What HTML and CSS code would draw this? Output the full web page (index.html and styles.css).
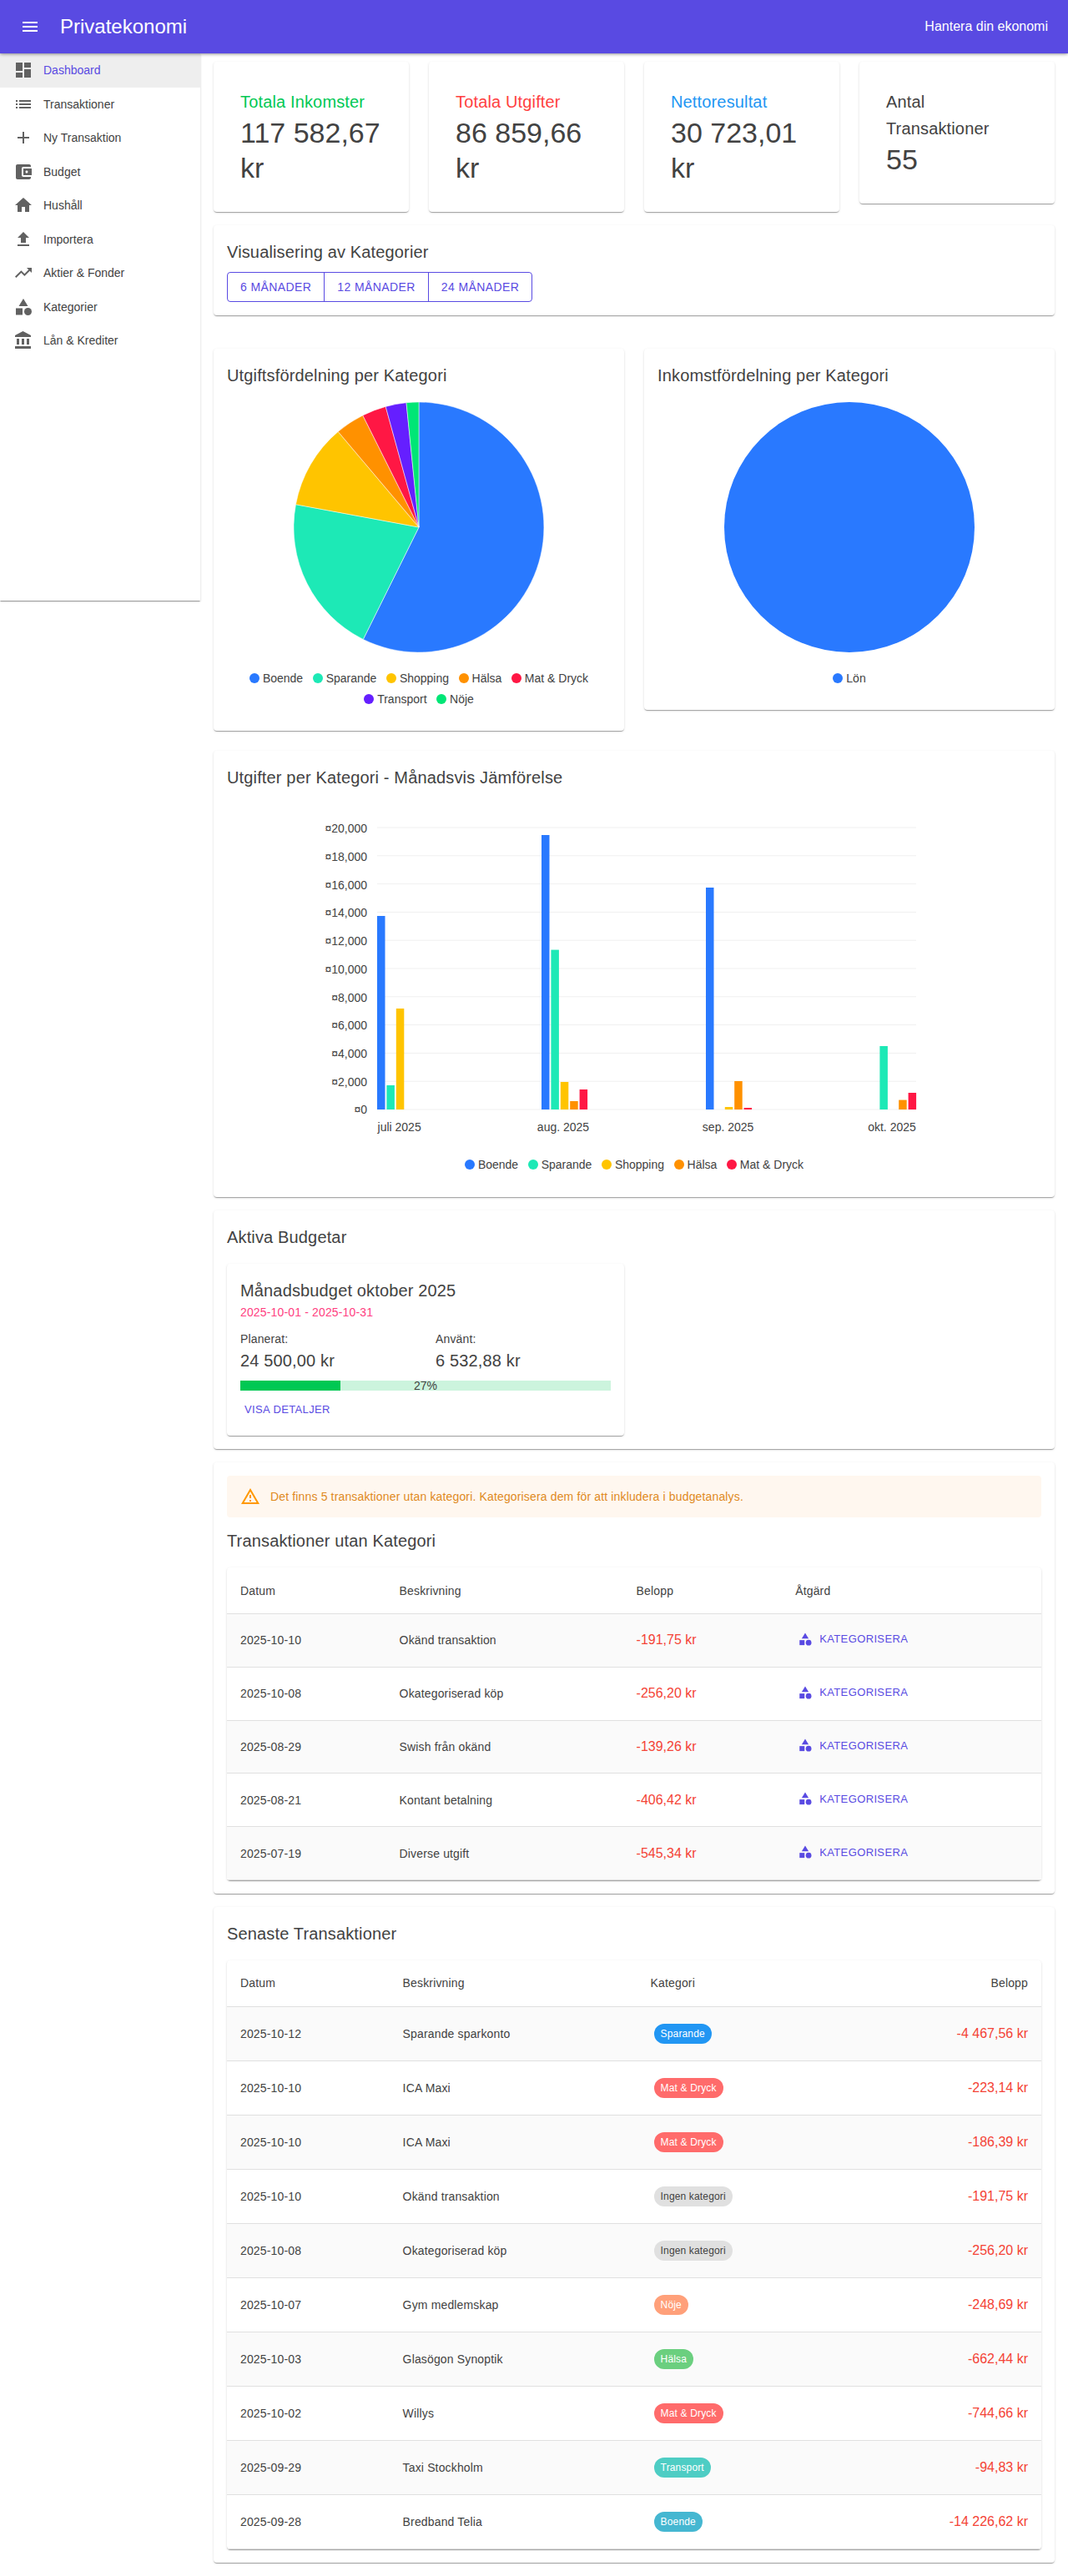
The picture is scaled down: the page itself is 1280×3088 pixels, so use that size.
FILE: index.html
```html
<!DOCTYPE html>
<html lang="sv">
<head>
    <meta charset="UTF-8">
    <meta name="viewport" content="width=device-width, initial-scale=1.0">
    <title>Privatekonomi</title>
    <link rel="stylesheet" href="styles.css">
</head>
<body>
    <!-- Icons used more than once -->
    <svg class="icon-defs" aria-hidden="true">
        <symbol id="icon-category" viewBox="0 0 24 24">
            <path d="M12 2l-5.5 9h11z"/><circle cx="17.5" cy="17.5" r="4.5"/><path d="M3 13.5h8v8H3z"/>
        </symbol>
    </svg>

    <header class="appbar">
        <svg class="appbar-menu" viewBox="0 0 24 24"><path d="M3 18h18v-2H3v2zm0-5h18v-2H3v2zm0-7v2h18V6H3z"/></svg>
        <span class="appbar-title">Privatekonomi</span>
        <span class="appbar-tagline">Hantera din ekonomi</span>
    </header>

    <div class="layout">
        <nav class="sidebar">
            <a class="nav-link active"><svg viewBox="0 0 24 24"><path d="M3 13h8V3H3v10zm0 8h8v-6H3v6zm10 0h8V11h-8v10zm0-18v6h8V3h-8z"/></svg>Dashboard</a>
            <a class="nav-link"><svg viewBox="0 0 24 24"><path d="M3 13h2v-2H3v2zm0 4h2v-2H3v2zm0-8h2V7H3v2zm4 4h14v-2H7v2zm0 4h14v-2H7v2zM7 7v2h14V7H7z"/></svg>Transaktioner</a>
            <a class="nav-link"><svg viewBox="0 0 24 24"><path d="M19 13h-6v6h-2v-6H5v-2h6V5h2v6h6v2z"/></svg>Ny Transaktion</a>
            <a class="nav-link"><svg viewBox="0 0 24 24"><path d="M21 18v1c0 1.1-.9 2-2 2H5c-1.11 0-2-.9-2-2V5c0-1.1.89-2 2-2h14c1.1 0 2 .9 2 2v1h-9c-1.11 0-2 .9-2 2v8c0 1.1.89 2 2 2h9zm-9-2h10V8H12v8zm4-2.5c-.83 0-1.5-.67-1.5-1.5s.67-1.5 1.5-1.5 1.5.67 1.5 1.5-.67 1.5-1.5 1.5z"/></svg>Budget</a>
            <a class="nav-link"><svg viewBox="0 0 24 24"><path d="M10 20v-6h4v6h5v-8h3L12 3 2 12h3v8z"/></svg>Hushåll</a>
            <a class="nav-link"><svg viewBox="0 0 24 24"><path d="M9 16h6v-6h4l-7-7-7 7h4zm-4 2h14v2H5z"/></svg>Importera</a>
            <a class="nav-link"><svg viewBox="0 0 24 24"><path d="M16 6l2.29 2.29-4.88 4.88-4-4L2 16.59 3.41 18l6-6 4 4 6.3-6.29L22 12V6z"/></svg>Aktier &amp; Fonder</a>
            <a class="nav-link"><svg viewBox="0 0 24 24"><use href="#icon-category"/></svg>Kategorier</a>
            <a class="nav-link"><svg viewBox="0 0 24 24"><path d="M4 10v7h3v-7H4zm6 0v7h3v-7h-3zM2 22h19v-3H2v3zm14-12v7h3v-7h-3zm-4.5-9L2 6v2h19V6l-9.5-5z"/></svg>Lån &amp; Krediter</a>
        </nav>

        <main class="content">
            <!-- Summary cards -->
            <section class="stats">
                <div class="card stat-card">
                    <div class="card-title text-income">Totala Inkomster</div>
                    <div class="stat-value">117 582,67 kr</div>
                </div>
                <div class="card stat-card">
                    <div class="card-title text-expense">Totala Utgifter</div>
                    <div class="stat-value">86 859,66 kr</div>
                </div>
                <div class="card stat-card">
                    <div class="card-title text-net">Nettoresultat</div>
                    <div class="stat-value">30 723,01 kr</div>
                </div>
                <div class="card stat-card">
                    <div class="card-title">Antal Transaktioner</div>
                    <div class="stat-value">55</div>
                </div>
            </section>

            <section class="card panel period-panel">
                <div class="card-title">Visualisering av Kategorier</div>
                <div class="button-group">
                    <button class="period-button">6 MÅNADER</button>
                    <button class="period-button">12 MÅNADER</button>
                    <button class="period-button">24 MÅNADER</button>
                </div>
            </section>

            <!-- Pie charts -->
            <section class="pie-row">
                <div class="card panel pie-card">
                    <div class="card-title">Utgiftsfördelning per Kategori</div>
                    <svg class="pie" viewBox="0 0 300 300">
                        <path fill="#2979ff" d="M150 150V0A150 150 0 1 1 83.3 284.4Z"/>
                        <path fill="#1de9b6" d="M150 150L83.3 284.4A150 150 0 0 1 2.5 122.7Z"/>
                        <path fill="#ffc400" d="M150 150L2.5 122.7A150 150 0 0 1 53.2 35.4Z"/>
                        <path fill="#ff9100" d="M150 150L53.2 35.4A150 150 0 0 1 82.8 15.9Z"/>
                        <path fill="#ff1744" d="M150 150L82.8 15.9A150 150 0 0 1 110.2 5.4Z"/>
                        <path fill="#651fff" d="M150 150L110.2 5.4A150 150 0 0 1 135 .75Z"/>
                        <path fill="#00e676" d="M150 150L135 .75A150 150 0 0 1 150 0Z"/>
                    </svg>
                    <ul class="legend">
                        <li><i class="dot boende"></i>Boende</li>
                        <li><i class="dot sparande"></i>Sparande</li>
                        <li><i class="dot shopping"></i>Shopping</li>
                        <li><i class="dot halsa"></i>Hälsa</li>
                        <li><i class="dot mat"></i>Mat &amp; Dryck</li>
                        <li><i class="dot transport"></i>Transport</li>
                        <li><i class="dot noje"></i>Nöje</li>
                    </ul>
                </div>
                <div class="card panel pie-card">
                    <div class="card-title">Inkomstfördelning per Kategori</div>
                    <svg class="pie" viewBox="0 0 300 300">
                        <circle fill="#2979ff" cx="150" cy="150" r="150"/>
                    </svg>
                    <ul class="legend">
                        <li><i class="dot boende"></i>Lön</li>
                    </ul>
                </div>
            </section>

            <!-- Monthly bar chart, viewBox uses page coordinates -->
            <section class="card panel bar-panel">
                <div class="card-title">Utgifter per Kategori - Månadsvis Jämförelse</div>
                <svg class="bar-chart" viewBox="272 948 976 436">
                    <g class="grid">
                        <path d="M452 992H1098M452 1025.8H1098M452 1059.6H1098M452 1093.4H1098M452 1127.2H1098M452 1161H1098M452 1194.8H1098M452 1228.6H1098M452 1262.4H1098M452 1296.2H1098M452 1330H1098"/>
                    </g>
                    <g class="y-labels">
                        <text x="440" y="998">¤20,000</text>
                        <text x="440" y="1032">¤18,000</text>
                        <text x="440" y="1066">¤16,000</text>
                        <text x="440" y="1099">¤14,000</text>
                        <text x="440" y="1133">¤12,000</text>
                        <text x="440" y="1167">¤10,000</text>
                        <text x="440" y="1201">¤8,000</text>
                        <text x="440" y="1234">¤6,000</text>
                        <text x="440" y="1268">¤4,000</text>
                        <text x="440" y="1302">¤2,000</text>
                        <text x="440" y="1335">¤0</text>
                    </g>
                    <g class="x-labels">
                        <text x="478.6" y="1356">juli 2025</text>
                        <text x="675" y="1356">aug. 2025</text>
                        <text x="872.6" y="1356">sep. 2025</text>
                        <text x="1069" y="1356">okt. 2025</text>
                    </g>
                    <g fill="#2979ff">
                        <rect x="452" y="1098" width="9.5" height="232"/>
                        <rect x="649" y="1001" width="9.5" height="329"/>
                        <rect x="846" y="1064" width="9.5" height="266"/>
                    </g>
                    <g fill="#1de9b6">
                        <rect x="463.4" y="1301" width="9.5" height="29"/>
                        <rect x="660.4" y="1138.6" width="9.5" height="191.4"/>
                        <rect x="1054.4" y="1254" width="9.5" height="76"/>
                    </g>
                    <g fill="#ffc400">
                        <rect x="474.8" y="1209" width="9.5" height="121"/>
                        <rect x="671.8" y="1297" width="9.5" height="33"/>
                        <rect x="868.8" y="1327" width="9.5" height="3"/>
                    </g>
                    <g fill="#ff9100">
                        <rect x="683.2" y="1320" width="9.5" height="10"/>
                        <rect x="880.2" y="1296" width="9.5" height="34"/>
                        <rect x="1077.2" y="1318.6" width="9.5" height="11.4"/>
                    </g>
                    <g fill="#ff1744">
                        <rect x="694.6" y="1306" width="9.5" height="24"/>
                        <rect x="891.6" y="1328" width="9.5" height="2"/>
                        <rect x="1088.6" y="1310" width="9.5" height="20"/>
                    </g>
                </svg>
                <ul class="legend">
                    <li><i class="dot boende"></i>Boende</li>
                    <li><i class="dot sparande"></i>Sparande</li>
                    <li><i class="dot shopping"></i>Shopping</li>
                    <li><i class="dot halsa"></i>Hälsa</li>
                    <li><i class="dot mat"></i>Mat &amp; Dryck</li>
                </ul>
            </section>

            <section class="card panel">
                <div class="card-title">Aktiva Budgetar</div>
                <div class="card budget-card">
                    <div class="card-title">Månadsbudget oktober 2025</div>
                    <div class="budget-dates">2025-10-01 - 2025-10-31</div>
                    <div class="budget-figures">
                        <div>
                            <div class="budget-label">Planerat:</div>
                            <div class="card-title">24 500,00 kr</div>
                        </div>
                        <div>
                            <div class="budget-label">Använt:</div>
                            <div class="card-title">6 532,88 kr</div>
                        </div>
                    </div>
                    <div class="progress">
                        <div class="progress-fill" style="width: 27%"></div>
                        <span class="progress-text">27%</span>
                    </div>
                    <button class="text-button">VISA DETALJER</button>
                </div>
            </section>

            <section class="card panel">
                <div class="alert">
                    <svg viewBox="0 0 24 24"><path d="M12 5.99L19.53 19H4.47L12 5.99M12 2L1 21h22L12 2zm1 14h-2v2h2v-2zm0-6h-2v4h2v-4z"/></svg>
                    Det finns 5 transaktioner utan kategori. Kategorisera dem för att inkludera i budgetanalys.
                </div>
                <div class="card-title table-title">Transaktioner utan Kategori</div>
                <table class="card data-table uncategorized">
                    <thead>
                        <tr><th>Datum</th><th>Beskrivning</th><th>Belopp</th><th>Åtgärd</th></tr>
                    </thead>
                    <tbody>
                        <tr>
                            <td>2025-10-10</td><td>Okänd transaktion</td><td class="amount">-191,75 kr</td>
                            <td><button class="category-button"><svg viewBox="0 0 24 24"><use href="#icon-category"/></svg>KATEGORISERA</button></td>
                        </tr>
                        <tr>
                            <td>2025-10-08</td><td>Okategoriserad köp</td><td class="amount">-256,20 kr</td>
                            <td><button class="category-button"><svg viewBox="0 0 24 24"><use href="#icon-category"/></svg>KATEGORISERA</button></td>
                        </tr>
                        <tr>
                            <td>2025-08-29</td><td>Swish från okänd</td><td class="amount">-139,26 kr</td>
                            <td><button class="category-button"><svg viewBox="0 0 24 24"><use href="#icon-category"/></svg>KATEGORISERA</button></td>
                        </tr>
                        <tr>
                            <td>2025-08-21</td><td>Kontant betalning</td><td class="amount">-406,42 kr</td>
                            <td><button class="category-button"><svg viewBox="0 0 24 24"><use href="#icon-category"/></svg>KATEGORISERA</button></td>
                        </tr>
                        <tr>
                            <td>2025-07-19</td><td>Diverse utgift</td><td class="amount">-545,34 kr</td>
                            <td><button class="category-button"><svg viewBox="0 0 24 24"><use href="#icon-category"/></svg>KATEGORISERA</button></td>
                        </tr>
                    </tbody>
                </table>
            </section>

            <section class="card panel">
                <div class="card-title table-title-top">Senaste Transaktioner</div>
                <table class="card data-table latest">
                    <thead>
                        <tr><th>Datum</th><th>Beskrivning</th><th>Kategori</th><th class="align-right">Belopp</th></tr>
                    </thead>
                    <tbody>
                        <tr><td>2025-10-12</td><td>Sparande sparkonto</td><td><span class="chip chip-sparande">Sparande</span></td><td class="amount align-right">-4 467,56 kr</td></tr>
                        <tr><td>2025-10-10</td><td>ICA Maxi</td><td><span class="chip chip-mat">Mat &amp; Dryck</span></td><td class="amount align-right">-223,14 kr</td></tr>
                        <tr><td>2025-10-10</td><td>ICA Maxi</td><td><span class="chip chip-mat">Mat &amp; Dryck</span></td><td class="amount align-right">-186,39 kr</td></tr>
                        <tr><td>2025-10-10</td><td>Okänd transaktion</td><td><span class="chip chip-none">Ingen kategori</span></td><td class="amount align-right">-191,75 kr</td></tr>
                        <tr><td>2025-10-08</td><td>Okategoriserad köp</td><td><span class="chip chip-none">Ingen kategori</span></td><td class="amount align-right">-256,20 kr</td></tr>
                        <tr><td>2025-10-07</td><td>Gym medlemskap</td><td><span class="chip chip-noje">Nöje</span></td><td class="amount align-right">-248,69 kr</td></tr>
                        <tr><td>2025-10-03</td><td>Glasögon Synoptik</td><td><span class="chip chip-halsa">Hälsa</span></td><td class="amount align-right">-662,44 kr</td></tr>
                        <tr><td>2025-10-02</td><td>Willys</td><td><span class="chip chip-mat">Mat &amp; Dryck</span></td><td class="amount align-right">-744,66 kr</td></tr>
                        <tr><td>2025-09-29</td><td>Taxi Stockholm</td><td><span class="chip chip-transport">Transport</span></td><td class="amount align-right">-94,83 kr</td></tr>
                        <tr><td>2025-09-28</td><td>Bredband Telia</td><td><span class="chip chip-boende">Boende</span></td><td class="amount align-right">-14 226,62 kr</td></tr>
                    </tbody>
                </table>
            </section>
        </main>
    </div>
</body>
</html>
```

FILE: styles.css
```css
* {
    box-sizing: border-box;
}

body {
    margin: 0;
    font-family: "Liberation Sans", Arial, sans-serif;
    font-size: 14px;
    color: #424242;
    background-color: #fff;
}

button {
    font-family: inherit;
    cursor: pointer;
}

.icon-defs {
    display: none;
}

/* App bar */
.appbar {
    display: flex;
    align-items: center;
    height: 64px;
    padding: 0 24px;
    color: #fff;
    background-color: #594ae2;
    box-shadow: 0 2px 4px -1px rgba(0,0,0,.2), 0 1px 2px rgba(0,0,0,.14), 0 1px 5px rgba(0,0,0,.12);
    position: relative;
}

.appbar-menu {
    width: 24px;
    height: 24px;
    fill: #fff;
}

.appbar-title {
    margin-left: 24px;
    font-size: 24px;
}

.appbar-tagline {
    margin-left: auto;
    font-size: 16px;
}

/* Side navigation */
.layout {
    display: flex;
    align-items: flex-start;
}

.sidebar {
    flex: 0 0 240px;
    height: 656px;
    background-color: #fff;
    box-shadow: 0 2px 1px -1px rgba(0,0,0,.2), 0 1px 1px rgba(0,0,0,.14), 0 1px 3px rgba(0,0,0,.12);
}

.nav-link {
    display: flex;
    align-items: center;
    height: 40.5px;
    padding: 0 16px;
    color: #424242;
}

.nav-link svg {
    width: 24px;
    height: 24px;
    margin-right: 12px;
    fill: #616161;
}

.nav-link.active {
    color: #594ae2;
    background-color: #eee;
}

/* Main column */
.content {
    flex: 1;
    min-width: 0;
    padding: 10px 16px 16px;
}

.card {
    background-color: #fff;
    border-radius: 4px;
    box-shadow: 0 2px 1px -1px rgba(0,0,0,.2), 0 1px 1px rgba(0,0,0,.14), 0 1px 3px rgba(0,0,0,.12);
}

.panel {
    padding: 16px;
    margin-bottom: 16px;
}

.card-title {
    font-size: 20px;
    line-height: 32px;
    letter-spacing: .0075em;
}

.stats {
    display: grid;
    grid-template-columns: repeat(4, 1fr);
    gap: 24px;
    align-items: start;
    margin-bottom: 16px;
}

.stat-card {
    padding: 32px;
}

.stat-value {
    font-size: 34px;
    line-height: 42px;
}

.text-income {
    color: #00c853;
}

.text-expense {
    color: #ff3f3f;
}

.text-net {
    color: #2196f3;
}

/* Period buttons */
.period-panel {
    margin-bottom: 40px;
}

.button-group {
    display: inline-flex;
    margin-top: 8px;
    vertical-align: top;
}

.period-button {
    height: 36px;
    padding: 0 15px;
    margin-left: -1px;
    font-size: 14px;
    letter-spacing: .02857em;
    color: #594ae2;
    background: none;
    border: 1px solid #594ae2;
}

.period-button:first-child {
    margin-left: 0;
    border-radius: 4px 0 0 4px;
}

.period-button:last-child {
    border-radius: 0 4px 4px 0;
}

/* Pie charts */
.pie-row {
    display: grid;
    grid-template-columns: 1fr 1fr;
    gap: 24px;
    align-items: start;
    margin-bottom: 24px;
}

.pie-card {
    margin-bottom: 0;
    padding-bottom: 26px;
}

.pie {
    display: block;
    width: 300px;
    height: 300px;
    margin: 16px auto 19px;
}

.pie path {
    stroke: #fff;
    stroke-width: .5;
}

.legend {
    display: flex;
    flex-wrap: wrap;
    justify-content: center;
    gap: 1px 11.5px;
    margin: 0;
    padding: 0;
    list-style: none;
}

.legend li {
    display: flex;
    align-items: center;
    height: 24px;
}

.dot {
    width: 12px;
    height: 12px;
    margin-right: 4px;
    border-radius: 50%;
}

.boende { background-color: #2979ff; }
.sparande { background-color: #1de9b6; }
.shopping { background-color: #ffc400; }
.halsa { background-color: #ff9100; }
.mat { background-color: #ff1744; }
.transport { background-color: #651fff; }
.noje { background-color: #00e676; }

/* Bar chart */
.bar-panel {
    padding-bottom: 27px;
}

.bar-chart {
    display: block;
    width: 976px;
    height: 436px;
}

.bar-chart text {
    font-size: 14px;
    fill: #424242;
}

.grid path {
    stroke: #f0f0f0;
    fill: none;
}

.y-labels text {
    text-anchor: end;
}

.x-labels text {
    text-anchor: middle;
}

/* Budget */
.budget-card {
    padding: 16px;
    margin-top: 16px;
    width: 476px;
}

.budget-dates {
    line-height: 20px;
    letter-spacing: .01071em;
    color: #ff4081;
}

.budget-figures {
    display: grid;
    grid-template-columns: 1fr 1fr;
    gap: 24px;
    margin-top: 12px;
}

.budget-label {
    line-height: 20px;
    letter-spacing: .01071em;
}

.progress {
    position: relative;
    height: 12px;
    margin-top: 8px;
    background-color: #ccf4dd;
}

.progress-fill {
    height: 100%;
    background-color: #00c853;
}

.progress-text {
    position: absolute;
    top: -4px;
    left: 0;
    right: 0;
    line-height: 20px;
    text-align: center;
}

.text-button {
    display: block;
    height: 31px;
    margin-top: 7px;
    padding: 0 5px;
    font-size: 13px;
    letter-spacing: .02857em;
    color: #594ae2;
    background: none;
    border: none;
}

/* Alert */
.alert {
    display: flex;
    align-items: center;
    height: 50px;
    padding: 0 16px;
    letter-spacing: .01071em;
    color: #e08a1e;
    background-color: #fff7ef;
    border-radius: 4px;
}

.alert svg {
    width: 24px;
    height: 24px;
    margin-right: 12px;
    fill: #ff9800;
}

.table-title {
    margin-top: 12px;
    margin-bottom: 16px;
}

.table-title-top {
    margin-bottom: 16px;
}

/* Tables */
.data-table {
    width: 100%;
    table-layout: fixed;
    border-collapse: separate;
    border-spacing: 0;
}

.data-table th,
.data-table td {
    padding: 0 16px;
    text-align: left;
    font-weight: 400;
    letter-spacing: .01071em;
    border-bottom: 1px solid #e0e0e0;
}

.data-table thead tr {
    height: 56px;
}

.data-table tbody tr:nth-child(odd) td {
    background-color: #fafafa;
}

.uncategorized tbody tr {
    height: 63.8px;
}

.latest tbody tr {
    height: 65px;
}

.uncategorized th:nth-child(1) { width: 190.6px; }
.uncategorized th:nth-child(2) { width: 284px; }
.uncategorized th:nth-child(3) { width: 190.6px; }

.latest th:nth-child(1) { width: 194.6px; }
.latest th:nth-child(2) { width: 297px; }
.latest th:nth-child(3) { width: 260px; }

.data-table .align-right {
    text-align: right;
}

.data-table .amount {
    font-size: 16px;
    letter-spacing: 0;
    color: #f44336;
}

.category-button {
    display: inline-flex;
    align-items: center;
    padding: 0 3px;
    font-size: 13px;
    letter-spacing: .02857em;
    color: #594ae2;
    background: none;
    border: none;
}

.category-button svg {
    width: 18px;
    height: 18px;
    margin-right: 8px;
    fill: #594ae2;
}

.chip {
    display: inline-flex;
    align-items: center;
    height: 24px;
    margin: 4px;
    padding: 0 8px;
    font-size: 12px;
    color: #fff;
    border-radius: 12px;
    vertical-align: middle;
}

.chip-sparande { background-color: #2196f3; }
.chip-mat { background-color: #ff6b6b; }
.chip-none { background-color: #e0e0e0; color: #424242; }
.chip-noje { background-color: #ffa07a; }
.chip-halsa { background-color: #6bcf7f; }
.chip-transport { background-color: #4ecdc4; }
.chip-boende { background-color: #45b7d1; }
```
